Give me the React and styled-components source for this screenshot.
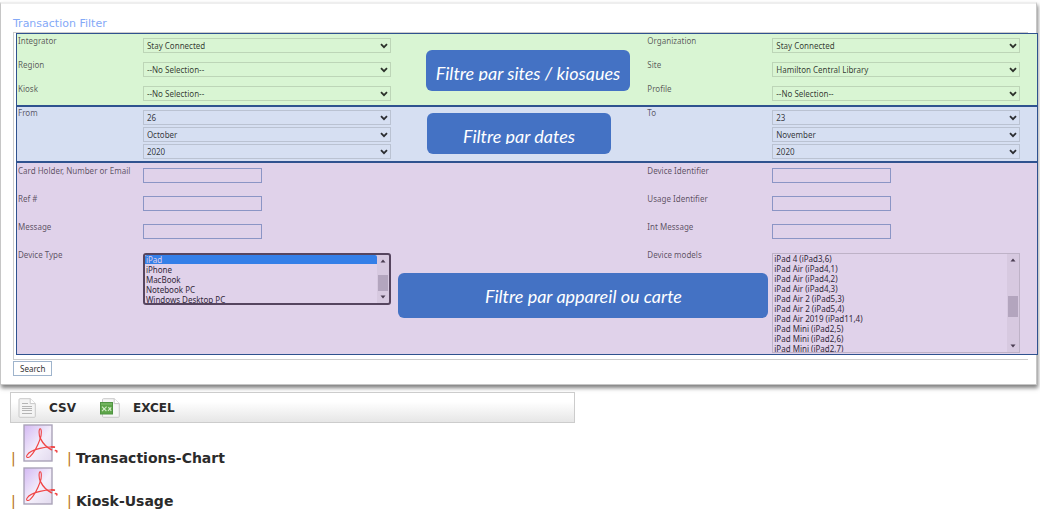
import React, { useEffect, useRef } from "react";
import { styled, createGlobalStyle } from "styled-components";

const deviceTypes = [
  "iPad",
  "iPhone",
  "MacBook",
  "Notebook PC",
  "Windows Desktop PC",
  "Windows Mobile",
];

const deviceModels = [
  "iPad 4 (iPad3,5)",
  "iPad 4 (iPad3,6)",
  "iPad Air (iPad4,1)",
  "iPad Air (iPad4,2)",
  "iPad Air (iPad4,3)",
  "iPad Air 2 (iPad5,3)",
  "iPad Air 2 (iPad5,4)",
  "iPad Air 2019 (iPad11,4)",
  "iPad Mini (iPad2,5)",
  "iPad Mini (iPad2,6)",
  "iPad Mini (iPad2,7)",
  "iPad Mini 2 (iPad4,4)",
];

const Dropdown = ({ id, value, label }) => (
  <SelectWrap>
    <Select id={id} defaultValue={value} aria-label={label}>
      <option>{value}</option>
    </Select>
    <Chevron viewBox="0 0 8 6" aria-hidden="true">
      <path d="M1 1.2 L4 4.2 L7 1.2" />
    </Chevron>
  </SelectWrap>
);

const ListBox = ({ id, options, selected, scroll = 0, active, height, thumbTop, thumbSize }) => {
  const listRef = useRef(null);

  // начальная прокрутка списка
  useEffect(() => {
    listRef.current.scrollTop = scroll;
  }, [scroll]);

  return (
    <ListFrame $active={active} $height={height}>
      <List id={id} ref={listRef} multiple size={4} defaultValue={selected ? [selected] : []}>
        {options.map((option) => (
          <option key={option}>{option}</option>
        ))}
      </List>
      <Track aria-hidden="true">
        <Arrow viewBox="0 0 6 4">
          <path d="M0.5 3.5 L3 0.5 L5.5 3.5 Z" />
        </Arrow>
        <Rail>
          <Thumb $top={thumbTop} $size={thumbSize} />
        </Rail>
        <Arrow viewBox="0 0 6 4">
          <path d="M0.5 0.5 L3 3.5 L5.5 0.5 Z" />
        </Arrow>
      </Track>
    </ListFrame>
  );
};

const SelectField = ({ id, label, value }) => (
  <>
    <Label htmlFor={id}>{label}</Label>
    <Control>
      <Dropdown id={id} value={value} />
    </Control>
  </>
);

const TextField = ({ id, label }) => (
  <>
    <Label htmlFor={id}>{label}</Label>
    <Control>
      <Input id={id} type="text" />
    </Control>
  </>
);

const DateField = ({ id, label, day, month, year }) => (
  <>
    <Label htmlFor={id}>{label}</Label>
    <Control>
      <Dropdown id={id} value={day} />
      <Dropdown value={month} label={`${label} month`} />
      <Dropdown value={year} label={`${label} year`} />
    </Control>
  </>
);

const CsvIcon = () => (
  <FileIcon viewBox="0 0 18 20" aria-hidden="true">
    <path d="M2 .7h10.2L17.3 5.6v12.7q0 1-1 1H2q-1 0-1-1V1.7q0-1 1-1z" fill="#f4f4f4" stroke="#c8c8c8" />
    <path d="M12.2 .7v4.9h5.1" fill="#fff" stroke="#c8c8c8" />
    <path d="M4 5.5h6M4 8.5h10M4 10.5h10M4 12.5h10M4 15.5h10" stroke="#b5b5b5" />
  </FileIcon>
);

const ExcelIcon = () => (
  <FileIcon $wide viewBox="0 0 20 20" aria-hidden="true">
    <path d="M3.5 .7h10.7L19.3 5.6v12.7q0 1-1 1H3.5q-1 0-1-1V1.7q0-1 1-1z" fill="#f6f6f6" stroke="#c8c8c8" />
    <path d="M14.2 .7v4.9h5.1" fill="#fff" stroke="#c8c8c8" />
    <rect x=".5" y="4.5" width="12" height="11.5" fill="#5da549" stroke="#4f9442" />
    <path d="M1 6h11" stroke="#86c274" />
    <path d="M2 8.6l4.4 4.6M6.6 8.6l-4.6 4.6M8 12.8l3.2-3.4M8.4 9.2l2.8 3.6" stroke="#cfe9c5" strokeWidth="1.2" />
  </FileIcon>
);

const PdfIcon = () => (
  <PdfSvg viewBox="0 0 36 38" aria-hidden="true">
    <defs>
      <linearGradient id="pdfPage" x1="0" y1="0" x2="1" y2="1">
        <stop offset="0" stopColor="#d3b8f3" />
        <stop offset=".55" stopColor="#f4effb" />
        <stop offset="1" stopColor="#e2daee" />
      </linearGradient>
    </defs>
    <rect x="1" y="1" width="28" height="36" fill="url(#pdfPage)" stroke="#aaa3b8" strokeWidth="1.4" />
    <g fill="none" stroke="#f04545" strokeLinecap="round" strokeLinejoin="round">
      <path
        d="M17.3 14.5C15.8 11.5 15.6 4.8 17.2 4.8C18.8 4.8 18.6 11 17.3 14.5C15 21 10.2 29.5 7 32.6C5.2 34.2 2.6 33.6 4 31.2C6 27.8 11.5 25.6 17 24.4C22 23.3 27.5 22.6 31.5 23.4"
        strokeWidth="1.1"
      />
      <path d="M17.4 14.5C19.6 18.8 23.5 23.4 28.5 25.8" strokeWidth="1.5" />
      <path d="M28.4 22.8l3 .2M32.4 26.6l1.4 .4v1" strokeWidth="1.6" />
    </g>
  </PdfSvg>
);

const App = () => {
  return (
    <>
      <GlobalStyle />
      <Card>
        <Title>Transaction Filter</Title>
        <form onSubmit={(e) => e.preventDefault()}>
          <FilterBox>
            <Section $color="#d9f5d3">
              <Fields>
                <SelectField id="integrator" label="Integrator" value="Stay Connected" />
                <SelectField id="organization" label="Organization" value="Stay Connected" />
                <SelectField id="region" label="Region" value="--No Selection--" />
                <SelectField id="site" label="Site" value="Hamilton Central Library" />
                <SelectField id="kiosk" label="Kiosk" value="--No Selection--" />
                <SelectField id="profile" label="Profile" value="--No Selection--" />
              </Fields>
              <Callout $left="40.1%" $top={16} $width={204} $height={41}>
                <CalloutText $clipped>Filtre par sites / kiosques</CalloutText>
              </Callout>
            </Section>
            <Section $color="#d6dff2">
              <Fields $top={1} $bottom={2}>
                <DateField id="from" label="From" day="26" month="October" year="2020" />
                <DateField id="to" label="To" day="23" month="November" year="2020" />
              </Fields>
              <Callout $left="40.2%" $top={6} $width={184} $height={41}>
                <CalloutText $clipped>Filtre par dates</CalloutText>
              </Callout>
            </Section>
            <Section $color="#e0d2ea">
              <Fields $top={3} $gap={11} $bottom={1}>
                <TextField id="holder" label="Card Holder, Number or Email" />
                <TextField id="device" label="Device Identifier" />
                <TextField id="ref" label="Ref #" />
                <TextField id="usage" label="Usage Identifier" />
                <TextField id="message" label="Message" />
                <TextField id="intMessage" label="Int Message" />
                <Label htmlFor="types">Device Type</Label>
                <Control>
                  <ListBox
                    id="types"
                    options={deviceTypes}
                    selected="iPad"
                    scroll={1}
                    active
                    height={52}
                    thumbTop="38%"
                    thumbSize="50%"
                  />
                </Control>
                <Label htmlFor="models">Device models</Label>
                <Control>
                  <ListBox
                    id="models"
                    options={deviceModels}
                    scroll={11}
                    height={100}
                    thumbTop="42%"
                    thumbSize="25%"
                  />
                </Control>
              </Fields>
              <Callout $left="37.4%" $top={110} $width={370} $height={45}>
                <CalloutText>Filtre par appareil ou carte</CalloutText>
              </Callout>
            </Section>
          </FilterBox>
          <SearchButton type="submit">Search</SearchButton>
        </form>
      </Card>
      <ExportBar>
        <ExportLink href="#csv">
          <CsvIcon />
          CSV
        </ExportLink>
        <ExportLink href="#excel">
          <ExcelIcon />
          EXCEL
        </ExportLink>
      </ExportBar>
      <Reports>
        <Report>
          <Pipe>|</Pipe>
          <PdfIcon />
          <Pipe>|</Pipe>
          <ReportLink href="#chart">Transactions-Chart</ReportLink>
        </Report>
        <Report>
          <Pipe>|</Pipe>
          <PdfIcon />
          <Pipe>|</Pipe>
          <ReportLink href="#usage">Kiosk-Usage</ReportLink>
        </Report>
      </Reports>
    </>
  );
};

export default App;

const GlobalStyle = createGlobalStyle`
  * {
    box-sizing: border-box;
  }

  body {
    margin: 0;
    background: #fff;
    font-family: "Noto Sans", sans-serif;
    font-size: 8px;
  }
`;

const Card = styled.div`
  margin: 2px 3px 0 0;
  padding: 12px 8px 8px 12px;
  border: 1px solid #c6c6c6;
  border-top: 2px solid #eee;
  box-shadow: 1px 3px 4px rgba(0, 0, 0, 0.5);
`;

const Title = styled.h1`
  margin: 0;
  font-family: "DejaVu Sans", sans-serif;
  font-size: 11px;
  font-weight: normal;
  line-height: 16px;
  color: #84a9f7;
`;

const FilterBox = styled.div`
  padding: 0 0 4px 2px;
  border: 1px solid #ccc;
  border-right: none;
`;

const Section = styled.div`
  position: relative;
  margin-right: -10px;
  border: 1px solid #2f528f;
  background: ${({ $color }) => $color};
`;

const Fields = styled.div`
  display: grid;
  grid-template-columns: 125fr 248fr 257fr 125fr 248fr;
  row-gap: ${({ $gap = 7 }) => $gap}px;
  padding: ${({ $top = 2, $bottom = 4 }) => `${$top}px 17px ${$bottom}px 1px`};

  & > :nth-child(4n + 3) {
    grid-column: 4;
  }
`;

const Label = styled.label`
  line-height: 10px;
  color: rgba(30, 20, 40, 0.7);
`;

const Control = styled.div`
  display: flex;
  flex-direction: column;
  align-items: stretch;
  gap: 2px;
  padding-top: 2px;
`;

const SelectWrap = styled.div`
  position: relative;
  display: flex;
`;

const Select = styled.select`
  appearance: none;
  width: 100%;
  height: 15px;
  padding: 0 16px 0 3px;
  border: 1px solid rgba(0, 0, 0, 0.13);
  border-radius: 0;
  background: transparent;
  font: inherit;
  color: rgba(0, 0, 0, 0.78);
`;

const Chevron = styled.svg`
  position: absolute;
  top: 5px;
  right: 3px;
  width: 8px;
  height: 6px;
  fill: none;
  stroke: rgba(0, 0, 0, 0.8);
  stroke-width: 1.8;
  pointer-events: none;
`;

const Input = styled.input`
  width: 48%;
  height: 15px;
  padding: 0 3px;
  border: 1px solid #8b95c5;
  background: transparent;
  font: inherit;
`;

const ListFrame = styled.div`
  display: flex;
  height: ${({ $height }) => $height}px;
  margin-top: 1px;
  border: ${({ $active }) =>
    $active ? "2px solid #56455f" : "1px solid rgba(0, 0, 0, 0.15)"};
  border-radius: ${({ $active }) => ($active ? 3 : 0)}px;
  overflow: hidden;
`;

const List = styled.select`
  flex: 1;
  height: 100%;
  padding: 0;
  border: none;
  outline: none;
  background: transparent;
  font: inherit;
  color: #33283a;
  scrollbar-width: none;

  option {
    min-height: 10px;
    height: 10px;
    padding: 0 1px;
    line-height: 10px;
  }

  option:checked {
    background: linear-gradient(#347fe8, #347fe8);
    color: #e0d2ea;
    -webkit-text-fill-color: #e0d2ea;
  }
`;

const Track = styled.div`
  display: flex;
  flex-direction: column;
  align-items: center;
  width: 12px;
  padding: 4px 0;
  background: rgba(0, 0, 0, 0.04);
`;

const Arrow = styled.svg`
  width: 6px;
  height: 4px;
  fill: #4a3d52;
`;

const Rail = styled.div`
  position: relative;
  flex: 1;
  width: 100%;
`;

const Thumb = styled.div`
  position: absolute;
  top: ${({ $top }) => $top};
  left: 1px;
  right: 1px;
  height: ${({ $size }) => $size};
  background: #b3a5be;
`;

const Callout = styled.div`
  position: absolute;
  top: ${({ $top }) => $top}px;
  left: ${({ $left }) => $left};
  display: flex;
  align-items: center;
  justify-content: center;
  width: ${({ $width }) => $width}px;
  height: ${({ $height }) => $height}px;
  border-radius: 6px;
  background: #4472c4;
`;

const CalloutText = styled.span`
  align-self: ${({ $clipped }) => ($clipped ? "flex-end" : "center")};
  height: ${({ $clipped }) => ($clipped ? "18px" : "auto")};
  margin-bottom: ${({ $clipped }) => ($clipped ? 10 : 0)}px;
  overflow: hidden;
  font-family: Lato, sans-serif;
  font-size: 18px;
  font-style: italic;
  line-height: ${({ $clipped }) => ($clipped ? 20 : 22)}px;
  white-space: nowrap;
  color: #fff;
`;

const SearchButton = styled.button`
  display: block;
  height: 15px;
  margin-top: 1px;
  padding: 0 6px;
  border: 1px solid #9fb4cc;
  background: #fff;
  font: inherit;
  color: #333;
`;

const ExportBar = styled.div`
  display: flex;
  align-items: center;
  gap: 24px;
  width: 54.3%;
  height: 31px;
  margin: 7px 0 0 10px;
  padding: 1px 7px 0;
  border: 1px solid #ccc;
  background: linear-gradient(#fff 30%, #e6e6e6);
`;

const ExportLink = styled.a`
  display: flex;
  align-items: center;
  gap: 13px;
  font-family: "DejaVu Sans", sans-serif;
  font-size: 12px;
  font-weight: bold;
  color: #2b2b2b;
  text-decoration: none;
`;

const FileIcon = styled.svg`
  width: ${({ $wide }) => ($wide ? 20 : 18)}px;
  height: 20px;
  fill: none;
`;

const Reports = styled.div`
  padding-left: 11px;
`;

const Report = styled.div`
  display: flex;
  align-items: flex-end;
  height: 43px;
  font-family: "DejaVu Sans", sans-serif;
  font-size: 14px;
  line-height: 16px;
`;

const Pipe = styled.span`
  width: 5px;
  color: #b87410;
`;

const PdfSvg = styled.svg`
  width: 36px;
  height: 38px;
  margin: 0 8px 4px 7px;
`;

const ReportLink = styled.a`
  margin-left: 4px;
  font-weight: bold;
  color: #2b2b2b;
  text-decoration: none;
`;
